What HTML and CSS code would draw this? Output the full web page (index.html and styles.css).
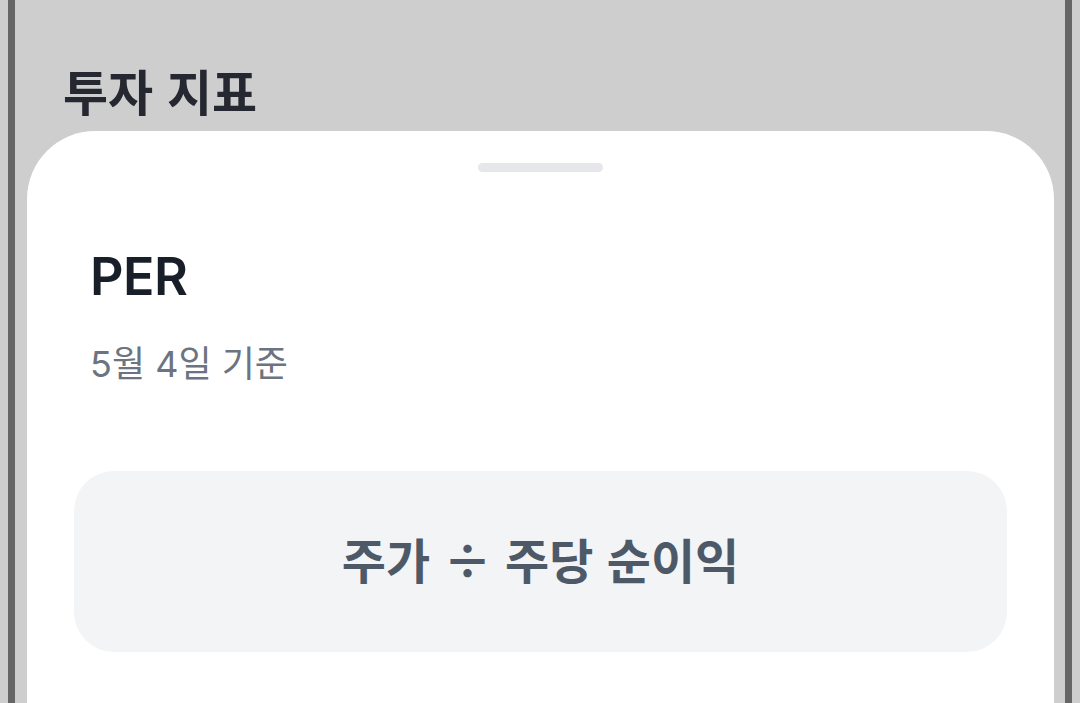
FILE: index.html
```html
<!DOCTYPE html>
<html lang="ko">
<head>
<meta charset="utf-8">
<link rel="stylesheet" href="styles.css">
</head>
<body>
<div class="frame">
  <h1 class="page-title">투자 지표</h1>
  <div class="sheet">
    <div class="handle"></div>
    <h2 class="sheet-title">PER</h2>
    <p class="sheet-sub">5월 4일 기준</p>
    <div class="formula">주가 ÷ 주당 순이익</div>
  </div>
</div>
</body>
</html>
```
FILE: styles.css
```css
html, body {
  margin: 0;
  padding: 0;
  height: 100%;
  overflow: hidden;
}
body {
  background: #cecece;
  font-family: "Noto Sans CJK KR", "Noto Sans", sans-serif;
}
.frame {
  margin: 0 8px;
  height: 703px;
  border-left: 7px solid #666666;
  border-right: 7px solid #666666;
  padding: 0 11px 0 12px;
  display: flex;
  flex-direction: column;
}
.page-title {
  margin: 0;
  padding: 62px 0 13px 36px;
  font-size: 49px;
  line-height: 56px;
  font-weight: 700;
  color: #252830;
}
.sheet {
  flex: 1;
  background: #ffffff;
  border-radius: 68px 68px 0 0;
  display: flex;
  flex-direction: column;
  padding: 32px 47px 0;
}
.handle {
  align-self: center;
  width: 125px;
  height: 9px;
  border-radius: 5px;
  background: #e5e7ea;
}
.sheet-title {
  margin: 73px 0 0 16px;
  font-family: Inter, "Noto Sans CJK KR", sans-serif;
  font-size: 52px;
  line-height: 64px;
  font-weight: 600;
  color: #191f28;
  letter-spacing: -0.5px;
}
.sheet-sub {
  margin: 31px 0 0 16px;
  font-family: Inter, "Noto Sans CJK KR", sans-serif;
  font-size: 36px;
  line-height: 48px;
  font-weight: 400;
  color: #6b7480;
}
.formula {
  margin-top: 83px;
  height: 181px;
  border-radius: 40px;
  background: #f2f4f6;
  display: flex;
  align-items: center;
  justify-content: center;
  padding-bottom: 8px;
  box-sizing: border-box;
  font-size: 48px;
  font-weight: 700;
  color: #4e5968;
}
```
